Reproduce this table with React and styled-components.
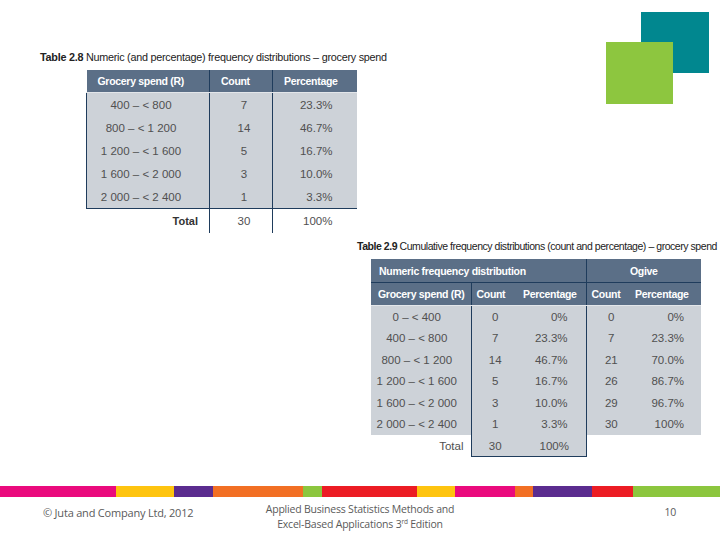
import React from 'react'
import styled, { createGlobalStyle } from 'styled-components'

const GlobalStyle = createGlobalStyle`
  html, body {
    margin: 0;
    padding: 0;
    background: #fff;
  }
  body {
    font-family: "Liberation Sans", Arial, sans-serif;
  }
`

const HEAD = '#5b6f87'
const BODY = '#cdd2d8'
const LINE = '#1f3c5c'

const Slide = styled.div`
  width: 720px;
  height: 540px;
  display: flex;
  flex-direction: column;
  overflow: hidden;
  background: #fff;
`

const TopRow = styled.div`
  display: flex;
  justify-content: space-between;
  align-items: flex-start;
`

const Section = styled.div`
  display: flex;
  flex-direction: column;
  gap: ${p => p.$gap}px;
  padding-top: ${p => p.$top}px;
  padding-left: ${p => p.$left}px;
`

const Caption = styled.div`
  font-size: ${p => p.$size || 11}px;
  line-height: 14px;
  color: #222;
  white-space: nowrap;
  letter-spacing: ${p => p.$spacing || '-0.25px'};

  b {
    font-weight: 700;
  }
`

const Table = styled.table`
  border-collapse: collapse;
  table-layout: fixed;
  margin-left: ${p => p.$indent}px;
  width: ${p => p.$width}px;
`

const HeadCell = styled.th`
  background: ${HEAD};
  color: #fff;
  font-size: 10.5px;
  font-weight: 700;
  letter-spacing: -0.3px;
  height: ${p => p.$h || 22}px;
  padding: 0 0 0 ${p => p.$pad ?? 8}px;
  text-align: ${p => p.$align || 'left'};
  white-space: nowrap;
  border-left: ${p => (p.$lineLeft ? `1px solid ${LINE}` : 'none')};
  border-bottom: ${p => (p.$lineBottom ? `1px solid ${LINE}` : '1px solid #e3e6ea')};
`

const Cell = styled.td`
  background: ${p => (p.$blank ? '#fff' : BODY)};
  color: #505050;
  font-size: 11.5px;
  height: ${p => p.$h || 23}px;
  padding: 0 ${p => p.$padR ?? 0}px 0 ${p => p.$padL ?? 0}px;
  text-align: ${p => p.$align || 'center'};
  white-space: nowrap;
  border-left: ${p => (p.$lineLeft ? `1px solid ${LINE}` : 'none')};
  border-right: ${p => (p.$lineRight ? `1px solid ${LINE}` : 'none')};
  border-bottom: ${p => (p.$lineBottom ? `1px solid ${LINE}` : 'none')};
`

const TotalLabel = styled(Cell)`
  font-weight: 700;
  color: #333;
  font-size: 11px;
`

const Logo = styled.svg`
  margin-top: 12px;
  margin-right: 11px;
  flex-shrink: 0;
`

const Footer = styled.div`
  margin-top: auto;
  height: 54px;
  display: flex;
  flex-direction: column;
`

const ColorBar = styled.div`
  display: flex;
  height: 11px;
`

const BarPiece = styled.div`
  width: ${p => p.$w}px;
  background: ${p => p.$c};
`

const FooterText = styled.div`
  display: grid;
  grid-template-columns: 1fr auto 1fr;
  align-items: start;
  padding-top: 5px;
  font-family: "Open Sans", "Liberation Sans", sans-serif;
  font-size: 10.5px;
  letter-spacing: -0.2px;
  color: #5a5a5a;
`

const FootLeft = styled.div`
  padding: 3px 0 0 43px;
  font-size: 11px;
`

const FootMid = styled.div`
  text-align: center;
  line-height: 15px;

  sup {
    font-size: 6.5px;
    line-height: 0;
  }
`

const FootRight = styled.div`
  justify-self: end;
  padding: 3px 44px 0 0;
`

const bar = [
  [116, '#ea0a7d'],
  [58, '#fec40f'],
  [39, '#5b2c8f'],
  [90, '#f26f24'],
  [19, '#8cc63e'],
  [95, '#ec1c24'],
  [38, '#fec40f'],
  [60, '#ea0a7d'],
  [18, '#f26f24'],
  [59, '#5b2c8f'],
  [41, '#ec1c24'],
  [87, '#8cc63e'],
]

const table28 = [
  ['400 – < 800', '7', '23.3%'],
  ['800 – < 1 200', '14', '46.7%'],
  ['1 200 – < 1 600', '5', '16.7%'],
  ['1 600 – < 2 000', '3', '10.0%'],
  ['2 000 – < 2 400', '1', '3.3%'],
]

const table29 = [
  ['0 – < 400', '0', '0%', '0', '0%'],
  ['400 – < 800', '7', '23.3%', '7', '23.3%'],
  ['800 – < 1 200', '14', '46.7%', '21', '70.0%'],
  ['1 200 – < 1 600', '5', '16.7%', '26', '86.7%'],
  ['1 600 – < 2 000', '3', '10.0%', '29', '96.7%'],
  ['2 000 – < 2 400', '1', '3.3%', '30', '100%'],
]

const Table28 = () => (
  <Table $indent={46} $width={270}>
    <colgroup>
      <col style={{ width: 123 }} />
      <col style={{ width: 63 }} />
      <col style={{ width: 84 }} />
    </colgroup>
    <thead>
      <tr>
        <HeadCell $pad={11}>Grocery spend (R)</HeadCell>
        <HeadCell $lineLeft $pad={11}>Count</HeadCell>
        <HeadCell $lineLeft $pad={11}>Percentage</HeadCell>
      </tr>
    </thead>
    <tbody>
      {table28.map((r, i) => {
        const last = i === table28.length - 1
        return (
          <tr key={r[0]}>
            <Cell $lineLeft $lineBottom={last} $padR={14}>{r[0]}</Cell>
            <Cell $lineLeft $lineBottom={last} $padL={6}>{r[1]}</Cell>
            <Cell $lineLeft $lineBottom={last} $align="right" $padR={24}>{r[2]}</Cell>
          </tr>
        )
      })}
      <tr>
        <TotalLabel $blank $align="right" $padR={11} $h={24}>Total</TotalLabel>
        <Cell $blank $lineLeft $padL={6} $h={24}>30</Cell>
        <Cell $blank $lineLeft $align="right" $padR={24} $h={24}>100%</Cell>
      </tr>
    </tbody>
  </Table>
)

const Table29 = () => (
  <Table $indent={14} $width={330}>
    <colgroup>
      <col style={{ width: 100 }} />
      <col style={{ width: 44 }} />
      <col style={{ width: 71 }} />
      <col style={{ width: 38 }} />
      <col style={{ width: 77 }} />
    </colgroup>
    <thead>
      <tr>
        <HeadCell colSpan={3} $h={23} $lineBottom>Numeric frequency distribution</HeadCell>
        <HeadCell colSpan={2} $h={23} $lineBottom $lineLeft $align="center" $pad={0}>Ogive</HeadCell>
      </tr>
      <tr>
        <HeadCell $pad={7}>Grocery spend (R)</HeadCell>
        <HeadCell $lineLeft $pad={5}>Count</HeadCell>
        <HeadCell $pad={8}>Percentage</HeadCell>
        <HeadCell $lineLeft $pad={5}>Count</HeadCell>
        <HeadCell $pad={11}>Percentage</HeadCell>
      </tr>
    </thead>
    <tbody>
      {table29.map(r => (
        <tr key={r[0]}>
          <Cell $h={21.5} $padR={8}>{r[0]}</Cell>
          <Cell $h={21.5} $lineLeft $padL={4}>{r[1]}</Cell>
          <Cell $h={21.5} $align="right" $padR={18} $lineRight>{r[2]}</Cell>
          <Cell $h={21.5} $padL={12}>{r[3]}</Cell>
          <Cell $h={21.5} $align="right" $padR={17}>{r[4]}</Cell>
        </tr>
      ))}
      <tr>
        <Cell $blank $h={21} $align="right" $padR={7}>Total</Cell>
        <Cell $h={21} $lineLeft $lineBottom $padL={4}>30</Cell>
        <Cell $h={21} $lineRight $lineBottom $padL={8}>100%</Cell>
        <Cell $blank $h={21} />
        <Cell $blank $h={21} />
      </tr>
    </tbody>
  </Table>
)

const App = () => {
  return (
    <Slide>
      <GlobalStyle />
      <TopRow>
        <Section $top={50} $left={40} $gap={6}>
          <Caption $size={10.8} $spacing="-0.25px">
            <b>Table 2.8</b> Numeric (and percentage) frequency distributions – grocery spend
          </Caption>
          <Table28 />
        </Section>
        <Logo width="103" height="92" viewBox="0 0 103 92">
          <rect x="35" y="0" width="68" height="61" fill="#01878f" />
          <rect x="0" y="30" width="67" height="62" fill="#8dc63f" />
        </Logo>
      </TopRow>
      <Section $top={6} $left={357} $gap={6}>
        <Caption $size={10.5} $spacing="-0.45px">
          <b>Table 2.9</b> Cumulative frequency distributions (count and percentage) – grocery spend
        </Caption>
        <Table29 />
      </Section>
      <Footer>
        <ColorBar>
          {bar.map(([w, c], i) => (
            <BarPiece key={i} $w={w} $c={c} />
          ))}
        </ColorBar>
        <FooterText>
          <FootLeft>© Juta and Company Ltd, 2012</FootLeft>
          <FootMid>
            Applied Business Statistics Methods and
            <br />
            Excel-Based Applications 3<sup>rd</sup> Edition
          </FootMid>
          <FootRight>10</FootRight>
        </FooterText>
      </Footer>
    </Slide>
  )
}

export default App
